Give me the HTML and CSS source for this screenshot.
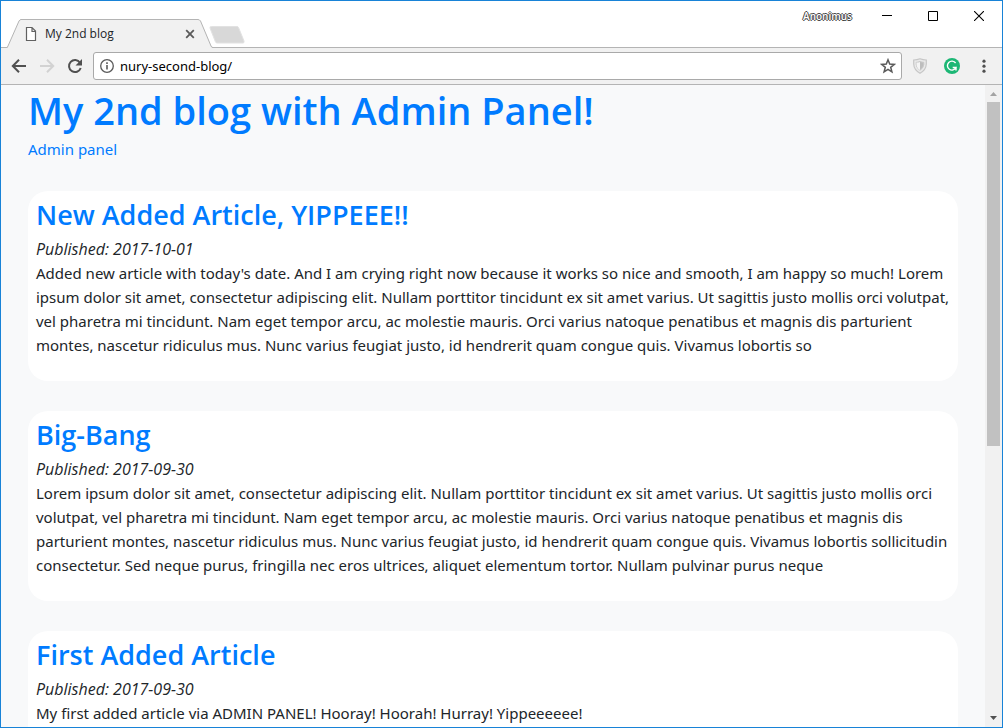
FILE: index.html
```html
<!DOCTYPE html>
<html lang="en">
<head>
<meta charset="utf-8">
<title>My 2nd blog</title>
<link rel="stylesheet" href="styles.css">
</head>
<body>
<div class="window">
  <header class="titlebar">
    <div class="tab">
      <svg class="tab-shape" width="240" height="30" viewBox="0 0 240 30" aria-hidden="true">
        <path d="M0 29.5H1L13 2Q14 .5 15 .5H192Q193.500 .5 194.500 2L206 28.500Q206.500 29.500 208 29.500V30H0Z" fill="#f1f1f1"/>
        <path d="M-6 28.500H.5Q1.500 28.500 2 27L13 2Q14 .5 15 .5H192Q193.500 .5 194.500 2L205 27Q205.500 28.500 207 28.500H240" fill="none" stroke="#b4b4b4"/>
        <path d="M205.500 7.500H231Q232 7.500 232.500 8.500L238 22Q238.500 24 237 24H211Q210 24 209.500 23L204 9Q203.500 7.500 205.500 7.500Z" fill="#d8d8d8" stroke="#e2e2e2"/>
      </svg>
      <svg class="page-icon" width="12" height="16" viewBox="0 0 12 16" aria-hidden="true"><path d="M1.500 1.500H7L10.500 5V14.500H1.500ZM7 1.500V5.500H10.500" fill="#fff" stroke="#616161" stroke-width="1.200"/></svg>
      <span class="tab-title">My 2nd blog</span>
      <button class="plain tab-close" aria-label="Close tab"><svg width="10" height="10" viewBox="0 0 10 10"><path d="M1.200 1.200 8.800 8.800M8.800 1.200 1.200 8.800" stroke="#5a5a5a" stroke-width="1.800"/></svg></button>
    </div>
    <div class="window-controls">
      <span class="profile">Anonimus</span>
      <button class="plain control" aria-label="Minimize"><svg width="10" height="10" viewBox="0 0 10 10"><path d="M0 4.500H10" stroke="#000"/></svg></button>
      <button class="plain control" aria-label="Maximize"><svg width="10" height="10" viewBox="0 0 10 10"><path d="M.5.5H9.500V9.500H.5Z" fill="none" stroke="#000"/></svg></button>
      <button class="plain control" aria-label="Close"><svg width="10" height="10" viewBox="0 0 10 10"><path d="M0 0 10 10M10 0 0 10" stroke="#000" stroke-width="1.100"/></svg></button>
    </div>
  </header>
  <nav class="toolbar" aria-label="Browser toolbar">
    <button class="plain tool" aria-label="Back"><svg width="16" height="16" viewBox="0 0 16 16"><path d="M15 8H2.500M8 1.800 1.800 8 8 14.200" fill="none" stroke="#505050" stroke-width="2"/></svg></button>
    <button class="plain tool" aria-label="Forward"><svg width="16" height="16" viewBox="0 0 16 16"><path d="M1 8H13.500M8 1.800 14.200 8 8 14.200" fill="none" stroke="#d2d2d2" stroke-width="2"/></svg></button>
    <button class="plain tool" aria-label="Reload"><svg width="16" height="16" viewBox="0 0 16 16"><path d="M13 4.700A6 6 0 1 0 13.700 10" fill="none" stroke="#505050" stroke-width="2"/><path d="M15 1V7.500H8.500Z" fill="#505050"/></svg></button>
    <div class="address">
      <svg width="16" height="16" viewBox="0 0 16 16" aria-hidden="true"><circle cx="8" cy="8" r="6.300" fill="none" stroke="#5a5a5a" stroke-width="1.300"/><path d="M8 7V11.500M8 4.300V5.900" stroke="#5a5a5a" stroke-width="1.600"/></svg>
      <input class="address-input" type="text" value="nury-second-blog/" aria-label="Address">
      <button class="plain" aria-label="Bookmark this page"><svg width="16" height="16" viewBox="0 0 16 16"><path d="M8 1.800 9.700 6.100 14.300 6.400 10.700 9.300 11.900 13.800 8 11.300 4.100 13.800 5.300 9.300 1.700 6.400 6.300 6.100Z" fill="none" stroke="#5a5a5a" stroke-width="1.500"/></svg></button>
    </div>
    <div class="extensions">
      <button class="plain" aria-label="Shield"><svg width="16" height="16" viewBox="0 0 16 16"><path d="M8 .8Q11 2 14.300 2V6Q14 12 8 15.200 2 12 1.700 6V2Q5 2 8 .8Z" fill="#e9e9e9" stroke="#c6c6c6" stroke-width="1.200"/><path d="M8 3.500Q10 4.300 11.800 4.300V6.500Q11.500 10 8 12.300 4.500 10 4.200 6.500V4.300Q6 4.300 8 3.500Z" fill="#bdbdbd" stroke="#c9c9c9"/><path d="M8 4V12Q4.500 10 4.500 6V4.500Q6.500 4.500 8 4Z" fill="#f4f4f4"/></svg></button>
      <button class="plain" aria-label="Grammar checker"><svg width="16" height="16" viewBox="0 0 16 16"><circle cx="8" cy="8" r="8" fill="#1cb775"/><path d="M11.600 5A4.500 4.500 0 1 0 12 9.500H8.700M12 8.800V12.500" fill="none" stroke="#fff" stroke-width="1.400"/></svg></button>
      <button class="plain" aria-label="Menu"><svg width="16" height="16" viewBox="0 0 16 16" fill="#505050"><circle cx="8" cy="3.200" r="1.600"/><circle cx="8" cy="8.200" r="1.600"/><circle cx="8" cy="13.200" r="1.600"/></svg></button>
    </div>
  </nav>
  <div class="viewport">
    <main class="blog">
      <h1><a href="#">My 2nd blog with Admin Panel!</a></h1>
      <a href="#admin">Admin panel</a>
      <article class="card">
        <h2><a href="#new">New Added Article, YIPPEEE!!</a></h2>
        <em>Published: 2017-10-01</em>
        <p>Added new article with today's date. And I am crying right now because it works so nice and smooth, I am happy so much! Lorem ipsum dolor sit amet, consectetur adipiscing elit. Nullam porttitor tincidunt ex sit amet varius. Ut sagittis justo mollis orci volutpat, vel pharetra mi tincidunt. Nam eget tempor arcu, ac molestie mauris. Orci varius natoque penatibus et magnis dis parturient montes, nascetur ridiculus mus. Nunc varius feugiat justo, id hendrerit quam congue quis. Vivamus lobortis so</p>
      </article>
      <article class="card">
        <h2><a href="#bang">Big-Bang</a></h2>
        <em>Published: 2017-09-30</em>
        <p>Lorem ipsum dolor sit amet, consectetur adipiscing elit. Nullam porttitor tincidunt ex sit amet varius. Ut sagittis justo mollis orci volutpat, vel pharetra mi tincidunt. Nam eget tempor arcu, ac molestie mauris. Orci varius natoque penatibus et magnis dis parturient montes, nascetur ridiculus mus. Nunc varius feugiat justo, id hendrerit quam congue quis. Vivamus lobortis sollicitudin consectetur. Sed neque purus, fringilla nec eros ultrices, aliquet elementum tortor. Nullam pulvinar purus neque</p>
      </article>
      <article class="card">
        <h2><a href="#first">First Added Article</a></h2>
        <em>Published: 2017-09-30</em>
        <p>My first added article via ADMIN PANEL! Hooray! Hoorah! Hurray! Yippeeeeee!</p>
      </article>
    </main>
    <div class="scrollbar" aria-hidden="true">
      <svg width="17" height="17" viewBox="0 0 17 17"><path d="M5 11 8.500 7 12 11Z" fill="#a3a3a3"/></svg>
      <div class="track"><div class="thumb"></div></div>
      <svg width="17" height="17" viewBox="0 0 17 17"><path d="M5 6 8.500 10 12 6Z" fill="#505050"/></svg>
    </div>
  </div>
</div>
</body>
</html>
```
FILE: styles.css
```css
* { box-sizing: border-box; }

body {
  margin: 0;
  font-family: "Noto Sans", "Open Sans", sans-serif;
  font-size: 15px;
  line-height: 24px;
  color: #212529;
}

a { color: #007bff; text-decoration: none; }

.plain {
  display: flex;
  align-items: center;
  justify-content: center;
  padding: 0;
  border: 0;
  background: none;
}

.window {
  display: flex;
  flex-direction: column;
  height: 100vh;
  border: 1px solid #1883d7;
  background: #fff;
}

/* Title bar */
.titlebar {
  display: flex;
  flex: none;
  justify-content: space-between;
  height: 47px;
  border-bottom: 1px solid #b4b4b4;
  font-family: "Open Sans", "Noto Sans", sans-serif;
}

.tab {
  position: relative;
  display: flex;
  align-items: center;
  width: 240px;
  height: 30px;
  margin: 18px 0 0 5px;
  padding-left: 19px;
  font-size: 12px;
}

.tab-shape { position: absolute; top: 0; left: 0; }
.page-icon { position: relative; }
.tab-title { position: relative; width: 140px; margin-left: 8px; }
.tab-close { position: relative; }

.window-controls { display: flex; align-items: center; height: 30px; }
.control { width: 46px; height: 30px; }

.profile {
  margin-right: 12px;
  font-size: 10px;
  font-weight: 600;
  color: #fff;
  text-shadow: 1px 0 #444, -1px 0 #444, 0 1px #444, 0 -1px #444;
}

/* Toolbar */
.toolbar {
  display: flex;
  flex: none;
  align-items: center;
  height: 37px;
  padding: 0 10px;
  border-bottom: 1px solid #b4b4b4;
  background: #f1f1f1;
}

.tool { width: 16px; margin-right: 12px; }
.tool:nth-of-type(3) { margin-right: 10px; }

.address {
  display: flex;
  flex: 1;
  align-items: center;
  gap: 5px;
  height: 28px;
  margin-right: 10px;
  padding: 0 5px;
  border: 1px solid #a9a9a9;
  border-radius: 3px;
  background: #fff;
}

.address-input {
  flex: 1;
  min-width: 0;
  padding: 0;
  border: 0;
  outline: 0;
  font-family: inherit;
  font-size: 13px;
  color: #000;
  background: none;
}

.extensions { display: flex; gap: 16px; }

/* Page */
.viewport { display: flex; flex: 1; min-height: 0; }

.blog {
  flex: 1;
  min-width: 0;
  overflow: hidden;
  padding: 0 27px;
  background: #f8f9fa;
}

h1, h2 {
  margin: 0;
  font-family: "Open Sans", "Noto Sans", sans-serif;
  font-weight: 600;
}

h1 { margin-bottom: 2px; font-size: 38px; line-height: 50px; }
h2 { margin-bottom: 6px; font-size: 27px; line-height: 32px; }

em {
  font-family: "Open Sans", "Noto Sans", sans-serif;
  font-size: 16px;
}

.card {
  margin-top: 30px;
  padding: 8px;
  border-radius: 20px;
  background: #fff;
}

.card p { margin: 0 0 16px; }

.scrollbar {
  display: flex;
  flex: none;
  flex-direction: column;
  width: 17px;
  background: #f1f1f1;
}

.track { flex: 1; padding: 0 2px; }
.thumb { height: 344px; background: #c1c1c1; }
```
